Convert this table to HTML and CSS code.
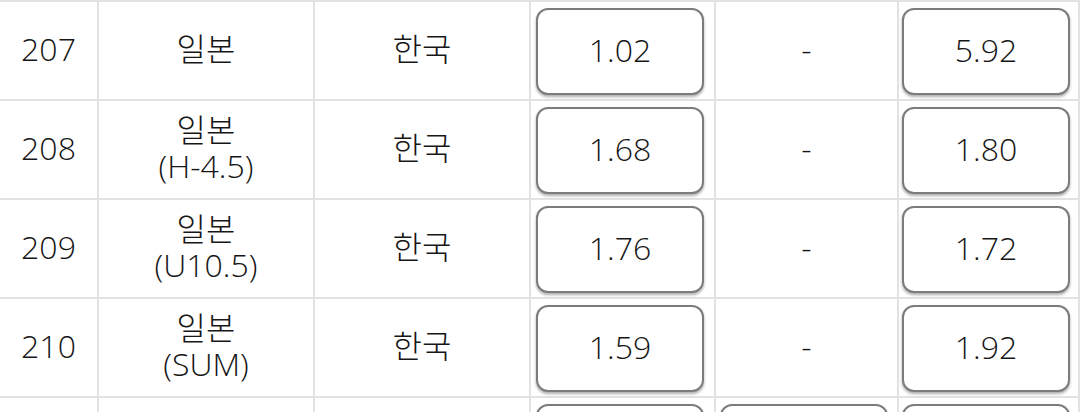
FILE: index.html
```html
<!DOCTYPE html>
<html lang="ko">
<head>
<meta charset="utf-8">
<link rel="stylesheet" href="styles.css">
</head>
<body>
<div class="table">
  <div class="cell num">207</div>
  <div class="cell">일본</div>
  <div class="cell">한국</div>
  <div class="cell btn-cell"><div class="btn">1.02</div></div>
  <div class="cell">-</div>
  <div class="cell btn-cell last"><div class="btn">5.92</div></div>

  <div class="cell num">208</div>
  <div class="cell two"><span class="line">일본</span><span class="line">(H-4.5)</span></div>
  <div class="cell">한국</div>
  <div class="cell btn-cell"><div class="btn">1.68</div></div>
  <div class="cell">-</div>
  <div class="cell btn-cell last"><div class="btn">1.80</div></div>

  <div class="cell num">209</div>
  <div class="cell two"><span class="line">일본</span><span class="line">(U10.5)</span></div>
  <div class="cell">한국</div>
  <div class="cell btn-cell"><div class="btn">1.76</div></div>
  <div class="cell">-</div>
  <div class="cell btn-cell last"><div class="btn">1.72</div></div>

  <div class="cell num">210</div>
  <div class="cell two"><span class="line">일본</span><span class="line">(SUM)</span></div>
  <div class="cell">한국</div>
  <div class="cell btn-cell"><div class="btn">1.59</div></div>
  <div class="cell">-</div>
  <div class="cell btn-cell last"><div class="btn">1.92</div></div>

  <div class="cell num"></div>
  <div class="cell"></div>
  <div class="cell"></div>
  <div class="cell btn-cell"><div class="btn"></div></div>
  <div class="cell btn-cell mid"><div class="btn"></div></div>
  <div class="cell btn-cell last"><div class="btn"></div></div>
</div>
</body>
</html>
```

FILE: styles.css
```css
html, body {
  margin: 0;
  padding: 0;
  background: #ffffff;
  overflow: hidden;
  width: 1080px;
  height: 412px;
}

body {
  font-family: "Open Sans", "Noto Sans CJK KR", sans-serif;
  font-weight: 300;
  color: #161616;
}

.table {
  display: grid;
  grid-template-columns: 97px 214px 214px 183px 181px 179px;
  grid-auto-rows: 97px;
  gap: 2px;
  padding: 2px 2px 2px 0;
  background: #e2e2e2;
  width: max-content;
}

.cell {
  background: #ffffff;
  display: flex;
  align-items: center;
  justify-content: center;
  text-align: center;
  font-size: 32px;
  line-height: 37px;
  padding-bottom: 4px;
  box-sizing: border-box;
}

.two {
  flex-direction: column;
}

.line {
  display: block;
  line-height: 36px;
}

.btn-cell {
  justify-content: flex-start;
  align-items: stretch;
  padding: 6px 0 4px 5px;
}

.btn-cell.last {
  padding-left: 3px;
}

.btn-cell.mid {
  padding-left: 4px;
}

.btn {
  width: 168px;
  box-sizing: border-box;
  border: 2px solid #7c7c7c;
  border-radius: 12px;
  background: #ffffff;
  box-shadow: 0 2px 3px rgba(0, 0, 0, 0.32);
  display: flex;
  align-items: center;
  justify-content: center;
  padding-bottom: 4px;
}
```
